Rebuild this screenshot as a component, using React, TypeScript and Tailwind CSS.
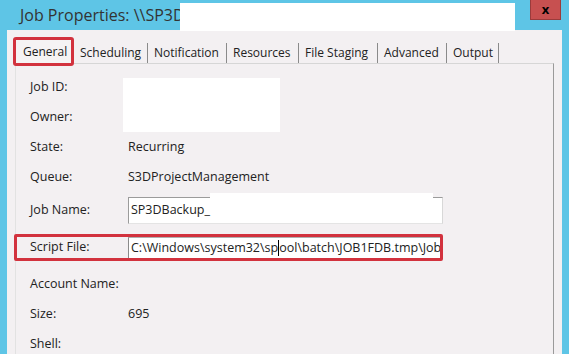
import React from "react";

const tabs = [
  { name: "Scheduling", w: "w-[74px]" },
  { name: "Notification", w: "w-[79px]" },
  { name: "Resources", w: "w-[72px]" },
  { name: "File Staging", w: "w-[79px]" },
  { name: "Advanced", w: "w-[69px]" },
  { name: "Output", w: "w-[52px]" },
];

const Row = ({ label, value }: { label: string; value?: string }) => (
  <div className="flex items-center h-[30px] pl-[14px]">
    <span className="w-[98px] shrink-0">{label}</span>
    {value ? <span>{value}</span> : null}
  </div>
);

export default function App() {
  return (
    <div className="w-[569px] h-[354px] overflow-hidden bg-[#5ec5e6] flex flex-col relative font-['Open_Sans',sans-serif] text-[#222]">
      {/* title bar */}
      <div className="h-[30px] flex items-start relative shrink-0">
        <span className="mt-[5px] ml-[20px] text-[16px] leading-[20px] text-[#333] whitespace-nowrap">
          {"Job Properties: \\\\SP3D"}
        </span>
        <div className="absolute left-[180px] top-[3px] w-[335px] h-[28px] bg-white" />
        <button className="ml-auto mr-[8px] w-[31px] h-[20px] bg-[#c75050] border border-t-0 border-[#9a3b3b] flex items-center justify-center text-[13px] font-bold leading-none text-black">
          x
        </button>
      </div>

      {/* dialog body */}
      <div className="mx-[7px] flex-1 bg-[#f3f0f2] flex flex-col">
        <div className="flex items-end h-[26px] mt-[7px] ml-[6px] text-[12px]">
          <div className="relative z-10 self-start w-[61px] h-[29px] border-[3px] border-[#d2323e] rounded-[3px] flex items-center pl-[7px] bg-[#f5f3f4]">
            General
          </div>
          {tabs.map((t) => (
            <div
              key={t.name}
              className={`${t.w} h-[20px] border-r border-[#8a8a8a] flex items-center pl-[6px] whitespace-nowrap`}
            >
              {t.name}
            </div>
          ))}
        </div>

        <div className="mx-[8px] flex-1 border-t border-l border-r border-t-[#d6d6d6] border-l-[#e2e2e2] border-r-[#9a9a9a] relative flex flex-col pt-[8px] text-[12.5px]">
          <div className="absolute left-[107px] top-[14px] w-[157px] h-[54px] bg-white" />
          <Row label="Job ID:" />
          <Row label="Owner:" />
          <Row label="State:" value="Recurring" />
          <Row label="Queue:" value="S3DProjectManagement" />

          <div className="flex items-center h-[36px] pl-[14px]">
            <span className="w-[98px] shrink-0">Job Name:</span>
            <div className="relative w-[315px] h-[27px] bg-white border border-t-[#9b9b9b] border-l-[#9b9b9b] border-r-[#d8d8d8] border-b-[#e4e4e4] flex items-center pl-[2px]">
              SP3DBackup_
              <div className="absolute left-[81px] top-[-5px] w-[223px] h-[20px] bg-white" />
            </div>
          </div>

          <div className="mt-[6px] mb-[8px] -ml-[2px] h-[27px] w-[429px] border-[3px] border-[#d2323e] rounded-[2px] flex items-center">
            <span className="pl-[13px] w-[111px] shrink-0">Script File:</span>
            <div className="flex-1 h-full bg-white border-l border-t border-l-[#8a8a8a] border-t-[#b0b0b0] overflow-hidden whitespace-nowrap flex items-center pl-[2px]">
              {"C:\\Windows\\system32\\sp"}
              <span className="inline-block w-0 h-[16px] border-l border-black" />
              {"ool\\batch\\JOB1FDB.tmp\\JobScript.bat"}
            </div>
          </div>

          <Row label="Account Name:" />
          <Row label="Size:" value="695" />
          <Row label="Shell:" />
        </div>
      </div>
    </div>
  );
}
